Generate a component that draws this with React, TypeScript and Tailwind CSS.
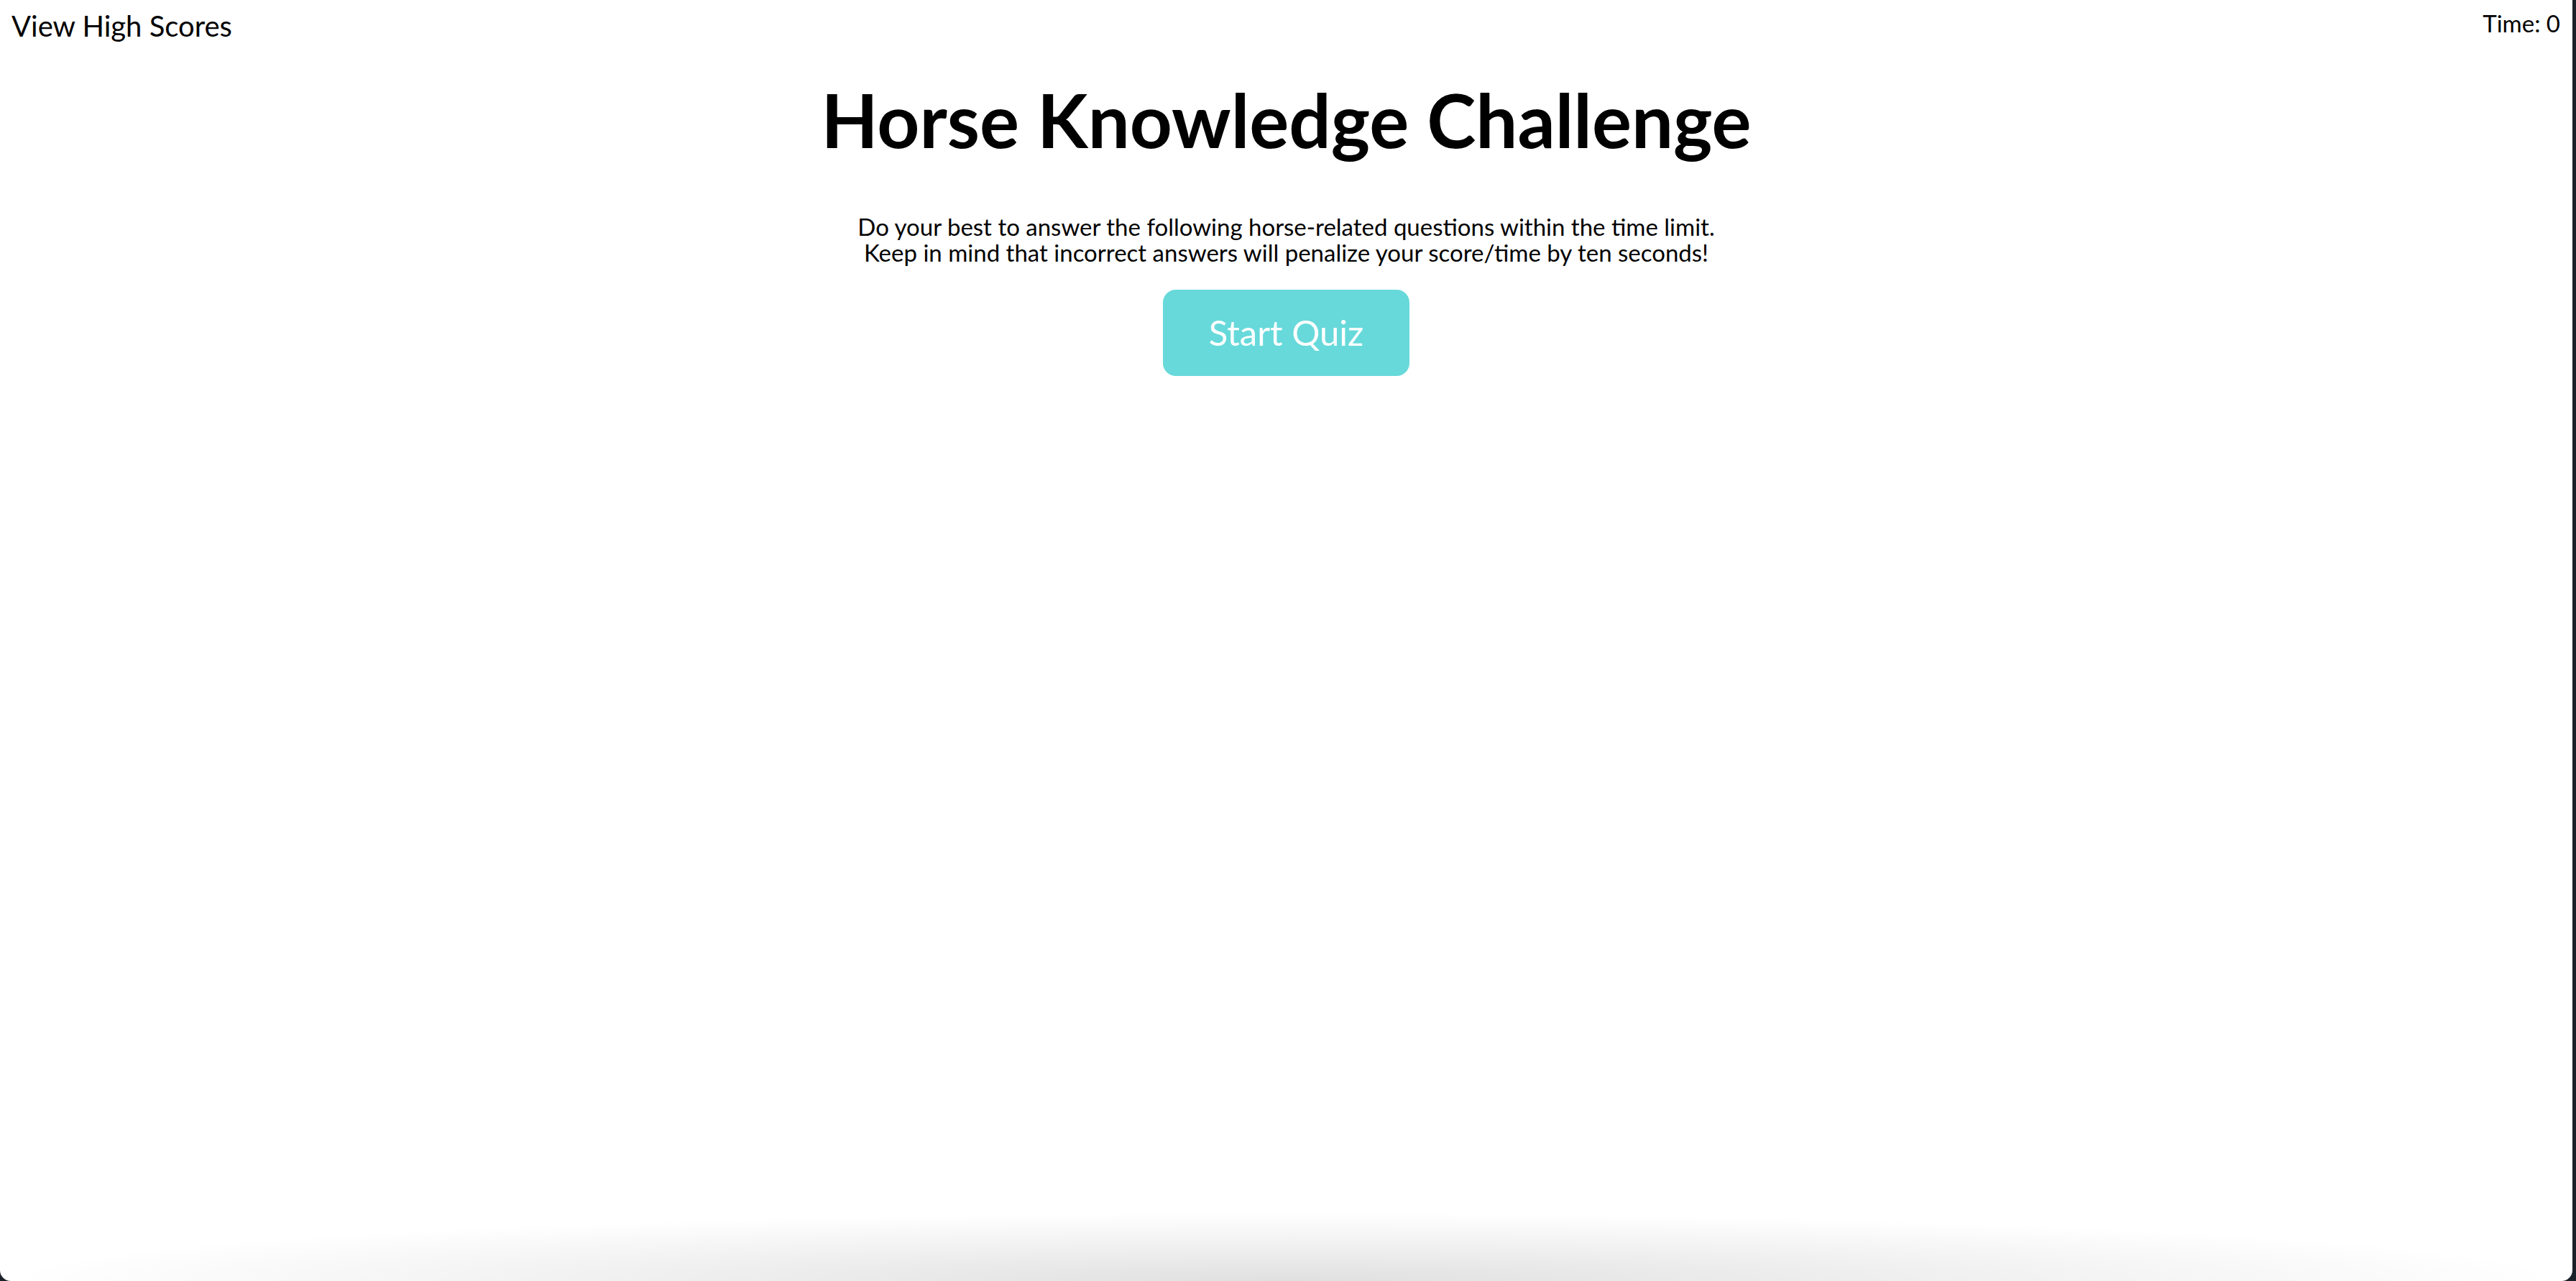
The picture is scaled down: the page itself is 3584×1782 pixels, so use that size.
import React from "react";

const App = () => {
  return (
    <div className="h-screen flex bg-[#1b2128] pr-[5px]">
      <div className="flex-1 flex flex-col overflow-hidden rounded-b-[15px] bg-white text-black font-['Trebuchet_MS','Lato',sans-serif]">
        <header className="flex justify-between items-start">
          <a href="#" className="pl-[16px] pt-[12px] text-[40px] leading-[1.2]">
            View High Scores
          </a>
          <div className="pr-[17px] pt-[13px] text-[33px] leading-[1.2]">Time: 0</div>
        </header>

        <main className="flex-1 flex flex-col items-center text-center">
          <h1 className="mt-[45px] text-[103px] leading-[1.2] font-bold">
            Horse Knowledge Challenge
          </h1>
          <p className="mt-[68px] text-[33px] leading-[36px]">
            Do your best to answer the following horse-related questions within the time limit.
            <br />
            Keep in mind that incorrect answers will penalize your score/time by ten seconds!
          </p>
          <button className="mt-[34px] w-[343px] h-[120px] rounded-[18px] bg-[#67d9da] text-white text-[49px]">
            Start Quiz
          </button>
        </main>

        <div className="h-[95px] bg-[radial-gradient(ellipse_50%_100%_at_50%_100%,rgba(0,0,0,0.12),rgba(0,0,0,0)_100%)]" />
      </div>
    </div>
  );
};

export default App;
